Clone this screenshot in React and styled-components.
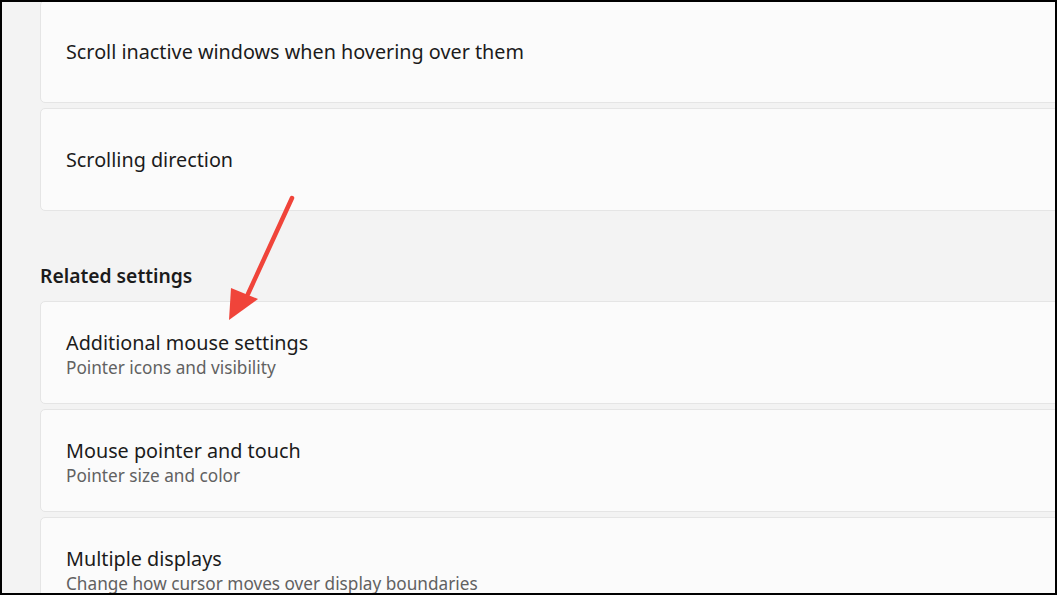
import React from "react";
import styled, { createGlobalStyle } from "styled-components";

const Global = createGlobalStyle`
  html, body { margin: 0; padding: 0; background: #000; }
  body { font-family: "Segoe UI", "Noto Sans", sans-serif; }
`;

const Frame = styled.div`
  position: relative;
  box-sizing: border-box;
  width: 1057px;
  height: 595px;
  border: 2px solid #000;
  background: #f3f3f3;
  overflow: hidden;
`;

const Content = styled.div`
  display: flex;
  flex-direction: column;
  margin-top: -2px;
  padding-left: 38px;
  margin-right: -12px;
`;

const Card = styled.div`
  box-sizing: border-box;
  height: 103px;
  margin-bottom: 5px;
  display: flex;
  flex-direction: column;
  justify-content: center;
  padding: ${(p) => (p.$sub ? "3px 0 0 25px" : "1px 0 0 25px")};
  background: #fbfbfb;
  border: 1px solid #e5e5e5;
  border-radius: 5px;
`;

const Title = styled.div`
  font-size: 19.8px;
  line-height: 26px;
  color: #1b1b1b;
`;

const Sub = styled.div`
  font-size: 17.2px;
  line-height: 23px;
  color: #616161;
`;

const Heading = styled.div`
  margin: 46px 0 11px 0;
  font-size: 19.3px;
  line-height: 28px;
  font-weight: 600;
  color: #1b1b1b;
`;

const Arrow = styled.svg`
  position: absolute;
  left: 0;
  top: 0;
  pointer-events: none;
`;

const top = ["Scroll inactive windows when hovering over them", "Scrolling direction"];
const related = [
  ["Additional mouse settings", "Pointer icons and visibility"],
  ["Mouse pointer and touch", "Pointer size and color"],
  ["Multiple displays", "Change how cursor moves over display boundaries"],
];

export default function App() {
  return (
    <>
      <Global />
      <Frame>
        <Content>
          {top.map((t) => (
            <Card key={t}>
              <Title>{t}</Title>
            </Card>
          ))}
          <Heading>Related settings</Heading>
          {related.map(([t, s]) => (
            <Card key={t} $sub>
              <Title>{t}</Title>
              <Sub>{s}</Sub>
            </Card>
          ))}
        </Content>
        <Arrow width="1057" height="595" viewBox="0 0 1057 595">
          <line x1="290" y1="196" x2="246" y2="292" stroke="#f0443a" strokeWidth="4.5" strokeLinecap="round" />
          <polygon points="227,318 229,286 256,297" fill="#f0443a" />
        </Arrow>
      </Frame>
    </>
  );
}
